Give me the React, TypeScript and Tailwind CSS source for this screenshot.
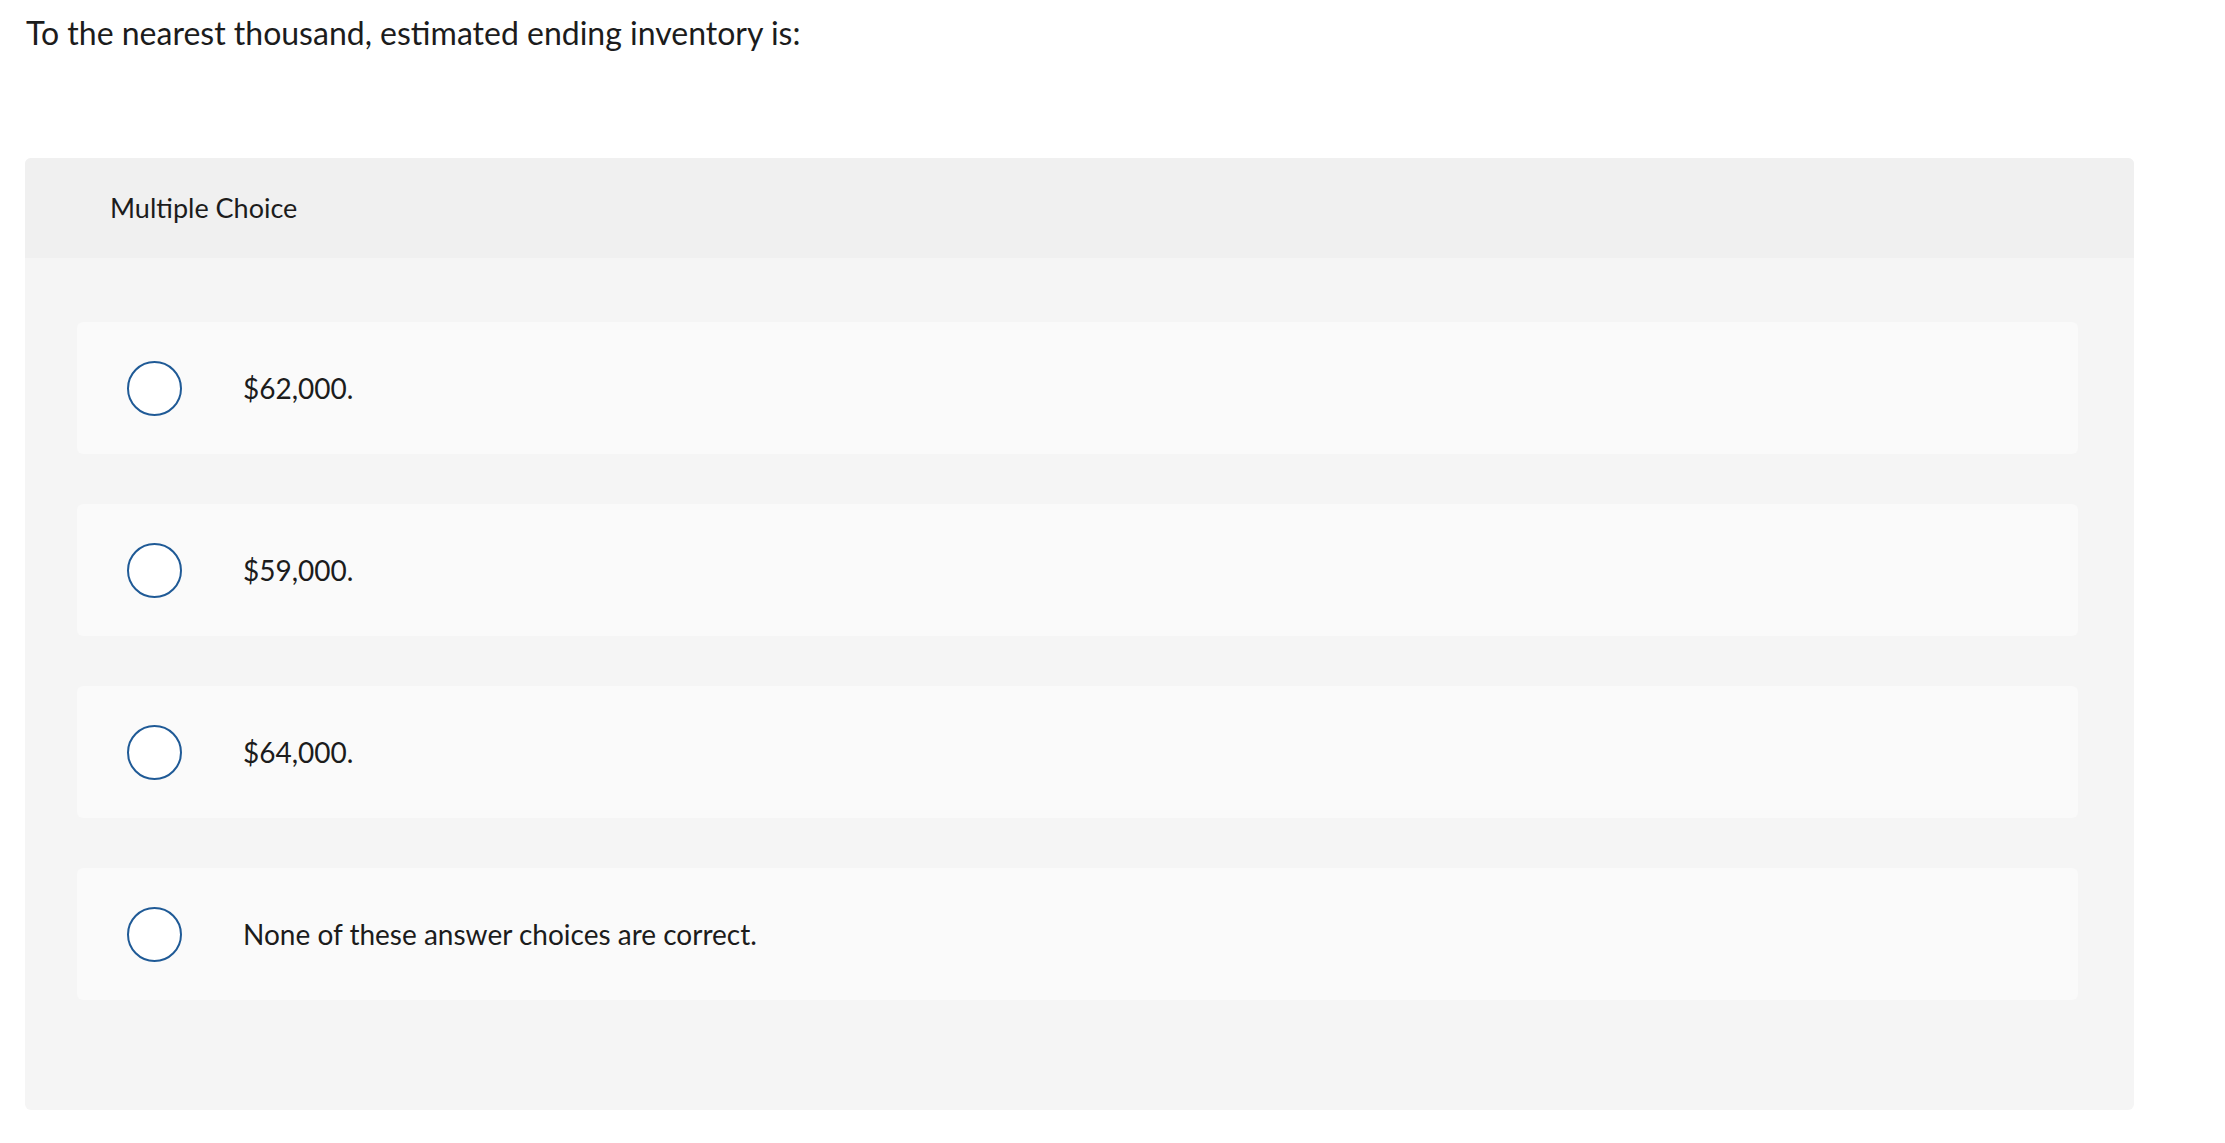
import React, { useState } from 'react';

const CHOICES = ['$62,000.', '$59,000.', '$64,000.', 'None of these answer choices are correct.'];

const App: React.FC = () => {
  const [selected, setSelected] = useState<number | null>(null);

  return (
    <div className="min-h-screen bg-white text-[#1c1c1c] font-['Lato','Liberation_Sans',sans-serif]">
      <div className="pl-[26px] pt-[13px] text-[32px] leading-[40px]">
        To the nearest thousand, estimated ending inventory is:
      </div>

      <div className="ml-[25px] mt-[105px] w-[2109px] rounded-md bg-[#f5f5f5] overflow-hidden">
        <div className="h-[100px] flex items-center pl-[85px] bg-[#f0f0f0] text-[27px]">
          Multiple Choice
        </div>

        <div className="flex flex-col gap-[50px] pt-[64px] pb-[110px] pl-[52px] pr-[56px]">
          {CHOICES.map((choice, idx) => (
            <label
              key={idx}
              onClick={() => setSelected(idx)}
              className="h-[132px] flex items-center rounded-md bg-[#fafafa] cursor-pointer"
            >
              <span className="ml-[50px] w-[55px] h-[55px] rounded-full border-2 border-[#1f5a96] bg-white flex items-center justify-center shrink-0">
                {selected === idx && <span className="w-[29px] h-[29px] rounded-full bg-[#1f5a96]" />}
              </span>
              <span className="ml-[61px] text-[28px]">{choice}</span>
            </label>
          ))}
        </div>
      </div>
    </div>
  );
};

export default App;
